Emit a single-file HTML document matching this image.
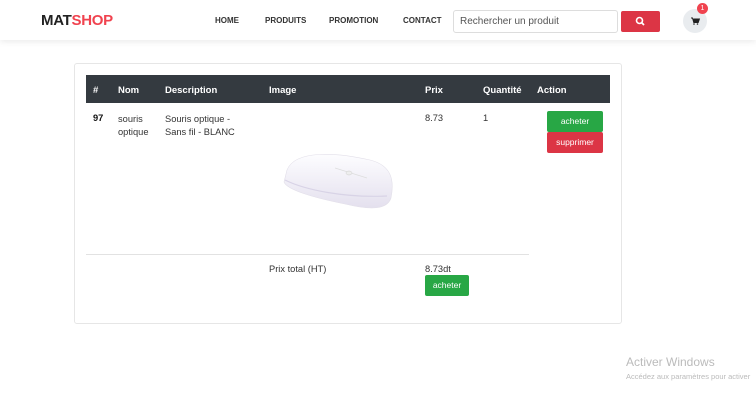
<!DOCTYPE html>
<html><head><meta charset="utf-8"><style>
*{margin:0;padding:0;box-sizing:border-box}
body{width:756px;height:403px;background:#fff;font-family:"Liberation Sans",sans-serif;position:relative;overflow:hidden;color:#212529}
.a{position:absolute;white-space:nowrap}
.nav{position:absolute;left:0;top:0;width:756px;height:40px;background:#fff;box-shadow:0 2px 6px rgba(0,0,0,.08)}
.ni{font-size:8px;font-weight:bold;color:#333;top:16px}
.h{color:#fff;font-weight:bold;font-size:9.5px;top:85px}
.t{font-size:9.3px;color:#333}
.btn{position:absolute;color:#fff;font-size:8.5px;text-align:center;border-radius:2px}
</style></head><body>
<div class="nav">
<div class="a" style="left:41px;top:12px;font-size:15px;font-weight:bold;letter-spacing:-0.3px"><span style="color:#222">MAT</span><span style="color:#f0434f">SHOP</span></div>
<div class="a ni" style="left:215px">HOME</div>
<div class="a ni" style="left:265px">PRODUITS</div>
<div class="a ni" style="left:329px">PROMOTION</div>
<div class="a ni" style="left:403px">CONTACT</div>
<div class="a" style="left:453px;top:10px;width:165px;height:23px;border:1px solid #ddd;border-radius:3px;font-size:10px;color:#555;padding:5px 6px">Rechercher un produit</div>
<div class="a" style="left:621px;top:11px;width:39px;height:21px;background:#dc3545;border-radius:2px">
<svg width="39" height="21"><circle cx="18.5" cy="9.5" r="3" fill="none" stroke="#fff" stroke-width="1.6"/><line x1="20.5" y1="11.5" x2="23" y2="14" stroke="#fff" stroke-width="1.8"/></svg></div>
<div class="a" style="left:683px;top:9px;width:24px;height:24px;border-radius:50%;background:#e9ecef">
<svg width="24" height="24"><path d="M8 9h1.5l1.3 4.5h4.4l1.2-3.5h-6" fill="#222" stroke="#222" stroke-width="1"/><circle cx="11" cy="15" r=".8" fill="#222"/><circle cx="14.5" cy="15" r=".8" fill="#222"/></svg></div>
<div class="a" style="left:697px;top:3px;width:11px;height:11px;border-radius:50%;background:#f0434f;color:#fff;font-size:7px;text-align:center;line-height:11px">1</div>
</div>
<div class="a" style="left:74px;top:63px;width:548px;height:261px;border:1px solid #e6e6e6;border-radius:3px"></div>
<div class="a" style="left:86px;top:75px;width:524px;height:28px;background:#343a40"></div>
<div class="a h" style="left:93px">#</div>
<div class="a h" style="left:118px">Nom</div>
<div class="a h" style="left:165px">Description</div>
<div class="a h" style="left:269px">Image</div>
<div class="a h" style="left:425px">Prix</div>
<div class="a h" style="left:483px">Quantité</div>
<div class="a h" style="left:537px">Action</div>
<div class="a t" style="left:93px;top:113px;font-weight:bold;color:#111">97</div>
<div class="a t" style="left:118px;top:113px;line-height:13px">souris<br>optique</div>
<div class="a t" style="left:165px;top:113px;line-height:13px">Souris optique -<br>Sans fil - BLANC</div>
<div class="a t" style="left:425px;top:113px">8.73</div>
<div class="a t" style="left:483px;top:113px">1</div>
<div class="btn" style="left:547px;top:111px;width:56px;height:21px;line-height:21px;background:#28a745">acheter</div>
<div class="btn" style="left:547px;top:132px;width:56px;height:21px;line-height:21px;background:#dc3545">supprimer</div>
<svg class="a" style="left:275px;top:148px" width="125" height="66">
<defs><linearGradient id="g" x1="0" y1="0" x2="0" y2="1"><stop offset="0" stop-color="#fdfdff"/><stop offset="1" stop-color="#e4e0ee"/></linearGradient></defs>
<path d="M12 22 C20 2 60 4 95 12 C115 17 120 30 116 50 C112 62 95 62 70 56 C40 50 12 42 9 34 Z" fill="url(#g)" stroke="#e2dfe9" stroke-width=".6"/>
<path d="M10 32 C30 42 70 50 112 48" fill="none" stroke="#d8d3e6" stroke-width="1.2"/>
<path d="M60 20 L92 30" stroke="#ddd" stroke-width=".7"/>
<ellipse cx="74" cy="25" rx="3" ry="2" fill="#eee" stroke="#ccc" stroke-width=".5"/>
</svg>
<div class="a" style="left:86px;top:254px;width:443px;height:1px;background:#e2e2e2"></div>
<div class="a t" style="left:269px;top:264px">Prix total (HT)</div>
<div class="a t" style="left:425px;top:264px">8.73dt</div>
<div class="btn" style="left:425px;top:275px;width:44px;height:21px;line-height:21px;background:#28a745">acheter</div>
<div class="a" style="left:626px;top:355px;font-size:12px;color:#bbb">Activer Windows</div>
<div class="a" style="left:626px;top:372px;font-size:7.5px;color:#bbb">Accédez aux paramètres pour activer</div>
</body></html>
